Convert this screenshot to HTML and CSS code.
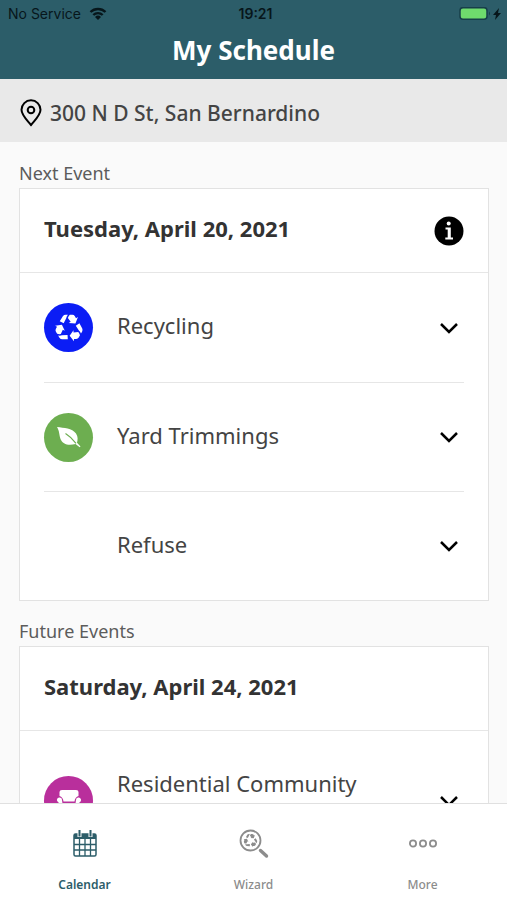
FILE: index.html
```html
<!DOCTYPE html>
<html lang="en">
<head>
  <meta charset="utf-8">
  <meta name="viewport" content="width=device-width, initial-scale=1">
  <title>My Schedule</title>
  <link rel="stylesheet" href="styles.css">
</head>
<body>
  <svg class="sprite" aria-hidden="true">
    <defs>
      <g id="recycle-arm">
        <path d="M-33-24L-22-42Q-18-47-12-47H-4Q-9-41-10-35L-19-17Z"/>
        <path d="M3-47H12Q18-47 21-42L25-35 32-39 23-16-1-18 6-22-4-36Q-2-42 3-47Z"/>
      </g>
      <symbol id="recycle" viewBox="-50 -50 100 100">
        <use href="#recycle-arm"/>
        <use href="#recycle-arm" transform="rotate(120)"/>
        <use href="#recycle-arm" transform="rotate(240)"/>
      </symbol>
      <symbol id="chevron" viewBox="0 0 20 12">
        <path d="M2 2l8 8 8-8" fill="none" stroke="#000" stroke-width="2.5"/>
      </symbol>
    </defs>
  </svg>

  <header class="header">
    <div class="status">
      <div class="status-left">
        <span>No Service</span>
        <svg width="18" height="14" viewBox="0 0 18 14" aria-hidden="true">
          <path d="M1.500 5a10.800 10.800 0 0 1 15 0M4.300 8a6.800 6.800 0 0 1 9.400 0" fill="none" stroke="#07161b" stroke-width="2.400"/>
          <path d="M9 13L6 10a4.300 4.300 0 0 1 6 0z" fill="#07161b"/>
        </svg>
      </div>
      <span class="time">19:21</span>
      <div class="status-right">
        <svg width="44" height="14" viewBox="0 0 44 14" aria-hidden="true">
          <rect x="1" y="0.700" width="27" height="11.500" rx="3" fill="#6fdb6d" stroke="#173f49" stroke-width="1.500"/>
          <path d="M30 4.500q2 2 0 4z" fill="#173f49"/>
          <path d="M40 1l-6 7h3l-1 5 6-7h-3z" fill="#07161b"/>
        </svg>
      </div>
    </div>
    <h1 class="title">My Schedule</h1>
  </header>

  <div class="address">
    <svg width="22" height="28" viewBox="0 0 22 28" aria-hidden="true">
      <path d="M11 26C6 20 1.500 16 1.500 10.800a9.500 9.500 0 0 1 19 0C20.500 16 16 20 11 26z" fill="none" stroke="#000" stroke-width="2"/>
      <circle cx="11" cy="11" r="3.300" fill="none" stroke="#000" stroke-width="2"/>
    </svg>
    <span>300 N D St, San Bernardino</span>
  </div>

  <main class="content">
    <section>
      <h2 class="label">Next Event</h2>
      <div class="card">
        <div class="card-head">
          <h3 class="date">Tuesday, April 20, 2021</h3>
          <button class="icon-button" type="button" aria-label="Information">
            <svg width="30" height="30" viewBox="0 0 30 30" aria-hidden="true">
              <circle cx="15" cy="15" r="14.500" fill="#000"/>
              <circle cx="14.700" cy="7.500" r="2" fill="#fff"/>
              <path d="M11.500 11.500h5.300v10h2.200v2h-7.700v-2h2.400v-8h-2.200z" fill="#fff"/>
            </svg>
          </button>
        </div>
        <ul class="events">
          <li class="event">
            <span class="badge blue"><svg width="28" height="28" aria-hidden="true"><use href="#recycle"/></svg></span>
            <span class="name">Recycling</span>
            <button class="icon-button" type="button" aria-label="Expand Recycling"><svg width="20" height="12" aria-hidden="true"><use href="#chevron"/></svg></button>
          </li>
          <li class="event">
            <span class="badge green">
              <svg width="24" height="24" viewBox="0 0 24 24" aria-hidden="true">
                <path d="M0 2C7 3 15 3 19 8.500c2.200 3.300 1.800 6.500 1 9.200l3.500 3.800-.8.800-4.200-3.300C11 21 5.500 19 3.500 14 2 9.500 2.500 6 0 2z" fill="#fff"/>
                <path d="M8.500 8.500c4 2.500 7.500 6 10.500 9.800" fill="none" stroke="#6dae50" stroke-width="1.200"/>
              </svg>
            </span>
            <span class="name">Yard Trimmings</span>
            <button class="icon-button" type="button" aria-label="Expand Yard Trimmings"><svg width="20" height="12" aria-hidden="true"><use href="#chevron"/></svg></button>
          </li>
          <li class="event">
            <span class="badge"></span>
            <span class="name">Refuse</span>
            <button class="icon-button" type="button" aria-label="Expand Refuse"><svg width="20" height="12" aria-hidden="true"><use href="#chevron"/></svg></button>
          </li>
        </ul>
      </div>
    </section>

    <section>
      <h2 class="label">Future Events</h2>
      <div class="card">
        <div class="card-head">
          <h3 class="date">Saturday, April 24, 2021</h3>
        </div>
        <ul class="events">
          <li class="event tall">
            <span class="badge purple">
              <svg width="26" height="22" viewBox="0 0 26 22" aria-hidden="true">
                <path d="M3.500 6V2Q3.500 0 6 0H20Q22.500 0 22.500 2V6Q19 7 18.500 11.500H7.500Q7 7 3.500 6z" fill="#fff"/>
                <path d="M3 7.500a2.500 2.500 0 0 1 3 2.500l.5 3.500h13L20 10a2.500 2.500 0 1 1 3.500 2.300L22.500 19h-2v2h-2v-2h-11v2h-2v-2h-2L2.500 12.300A2.500 2.500 0 0 1 3 7.500z" fill="#fff"/>
              </svg>
            </span>
            <span class="name">Residential Community</span>
            <button class="icon-button" type="button" aria-label="Expand Residential Community"><svg width="20" height="12" aria-hidden="true"><use href="#chevron"/></svg></button>
          </li>
        </ul>
      </div>
    </section>
  </main>

  <nav class="tabs">
    <a class="tab active" href="#calendar" aria-current="page">
      <svg width="26" height="30" viewBox="0 0 26 30" aria-hidden="true">
        <rect x="2" y="5" width="22" height="22" rx="1.500" fill="#fff" stroke="currentColor" stroke-width="1.500"/>
        <path d="M2 5h22v5H2z" fill="currentColor"/>
        <path d="M2 15.500h22M2 21h22M7.500 10v17M13 10v17M18.500 10v17" stroke="currentColor" stroke-width="1.300"/>
        <path d="M7.500 3v5M18.500 3v5" stroke="#fff" stroke-width="4"/>
        <path d="M7.500 1v6.500M18.500 1v6.500" stroke="currentColor" stroke-width="2"/>
      </svg>
      <span>Calendar</span>
    </a>
    <a class="tab" href="#wizard">
      <svg width="30" height="30" viewBox="0 0 30 30" fill="currentColor" aria-hidden="true">
        <circle cx="11.500" cy="11.500" r="10" fill="none" stroke="currentColor" stroke-width="1.800"/>
        <use href="#recycle" x="4.500" y="4.500" width="14" height="14"/>
        <path d="M21.500 21.500l6 5.500" stroke="currentColor" stroke-width="3.400" stroke-linecap="round"/>
      </svg>
      <span>Wizard</span>
    </a>
    <a class="tab" href="#more">
      <svg width="28" height="30" viewBox="0 0 28 30" fill="none" stroke="currentColor" stroke-width="1.800" aria-hidden="true">
        <circle cx="4" cy="14.500" r="3.100"/><circle cx="14" cy="14.500" r="3.100"/><circle cx="24" cy="14.500" r="3.100"/>
      </svg>
      <span>More</span>
    </a>
  </nav>
</body>
</html>
```

FILE: styles.css
```css
* {
  box-sizing: border-box;
}

body {
  display: flex;
  flex-direction: column;
  height: 100vh;
  margin: 0;
  overflow: hidden;
  background: #fafafa;
  color: #333;
  font-family: "Noto Sans", "Open Sans", sans-serif;
}

h1, h2, h3, ul {
  margin: 0;
  padding: 0;
}

svg {
  display: block;
}

.sprite {
  display: none;
}

.header {
  padding: 4px 4px 8px;
  background: #2c5d69;
  color: #fff;
}

.status {
  display: grid;
  grid-template-columns: 1fr auto 1fr;
  align-items: center;
  height: 20px;
  padding-left: 4px;
  color: #07161b;
  font: 14px/20px Inter, sans-serif;
}

.status-left {
  display: flex;
  align-items: center;
  gap: 8px;
}

.status-right {
  justify-self: end;
}

.time {
  font-weight: 600;
}

.title {
  margin-top: 6px;
  font-size: 26px;
  line-height: 41px;
  font-weight: 700;
  text-align: center;
}

.address {
  display: flex;
  align-items: center;
  gap: 8px;
  padding: 18px 20px 13px;
  background: #e9e9e9;
  color: #444;
  font-size: 21px;
  line-height: 32px;
  font-weight: 500;
}

.content {
  flex: 1;
  min-height: 0;
  overflow: hidden;
  padding: 17px 18px 0 19px;
}

.label {
  padding-bottom: 1px;
  color: #5c5c5c;
  font-size: 18px;
  line-height: 28px;
  font-weight: 400;
}

.card {
  margin-bottom: 16px;
  border: 1px solid #e2e2e2;
  background: #fff;
}

.card-head {
  display: flex;
  align-items: center;
  justify-content: space-between;
  height: 84px;
  padding: 0 24px;
  border-bottom: 1px solid #e6e6e6;
}

.date {
  padding-bottom: 6px;
  font-size: 22px;
  line-height: 32px;
  font-weight: 700;
}

.icon-button {
  display: flex;
  justify-content: center;
  width: 30px;
  padding: 0;
  border: 0;
  background: none;
}

.events {
  padding: 0 24px;
  list-style: none;
}

.event {
  display: flex;
  align-items: center;
  gap: 24px;
  height: 109px;
}

.event + .event {
  border-top: 1px solid #e6e6e6;
}

.event.tall {
  height: 139px;
}

.badge {
  display: grid;
  place-items: center;
  width: 49px;
  height: 49px;
  border-radius: 50%;
  fill: #fff;
}

.blue {
  background: #0b1df5;
}

.green {
  background: #6dae50;
}

.purple {
  background: #b92f9c;
}

.name {
  flex: 1;
  padding-bottom: 5px;
  color: #444;
  font-size: 22px;
  line-height: 32px;
}

.tall .name {
  min-height: 68px;
}

.tabs {
  display: grid;
  grid-template-columns: repeat(3, 1fr);
  height: 97px;
  padding-top: 25px;
  border-top: 1px solid #e0e0e0;
  background: #fff;
}

.tab {
  display: flex;
  flex-direction: column;
  align-items: center;
  gap: 17px;
  color: #8c8c8c;
  font-size: 12px;
  line-height: 18px;
  font-weight: 500;
  text-decoration: none;
}

.active {
  color: #2c5d69;
  font-weight: 600;
}
```
